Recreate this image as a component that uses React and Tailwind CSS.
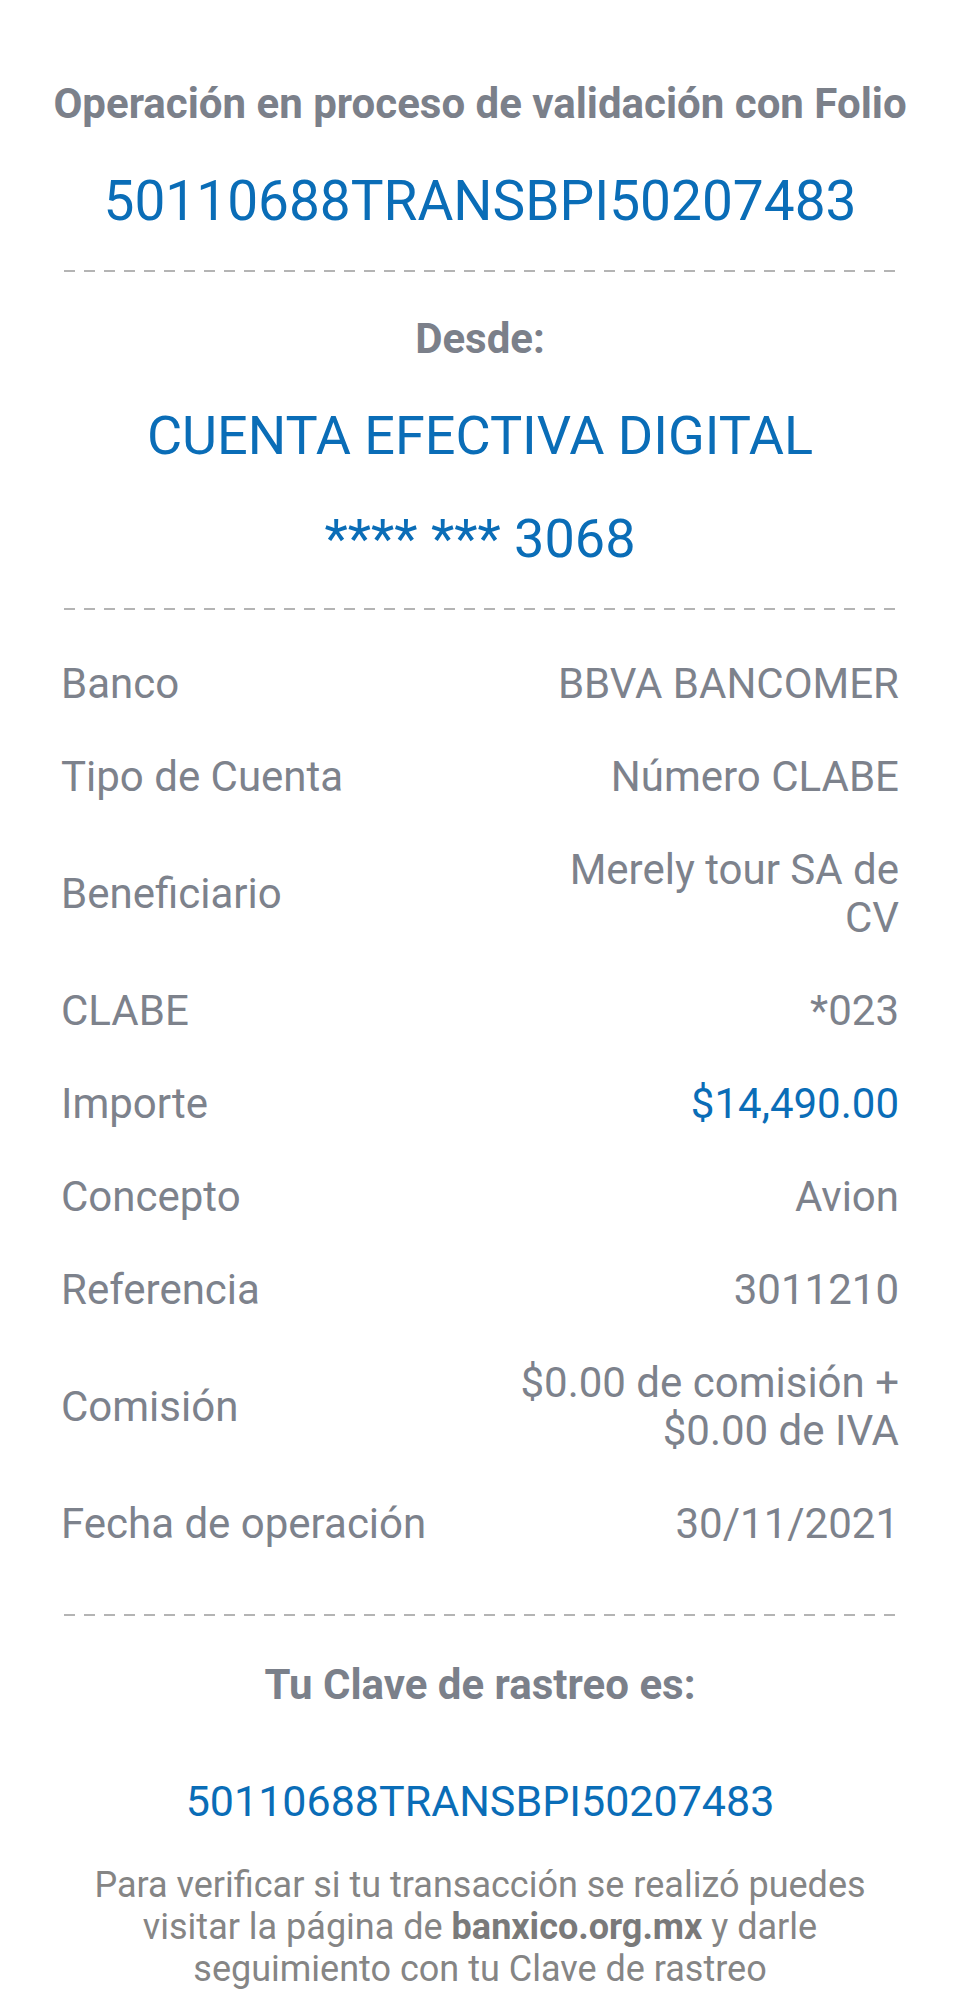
import React from 'react';

const rows = [
    { label: 'Banco', value: 'BBVA BANCOMER' },
    { label: 'Tipo de Cuenta', value: 'Número CLABE' },
    { label: 'Beneficiario', value: 'Merely tour SA de CV' },
    { label: 'CLABE', value: '*023' },
    { label: 'Importe', value: '$14,490.00', blue: true },
    { label: 'Concepto', value: 'Avion' },
    { label: 'Referencia', value: '3011210' },
    { label: 'Comisión', value: '$0.00 de comisión + $0.00 de IVA' },
    { label: 'Fecha de operación', value: '30/11/2021' }
];

// dashed separator line
const Divider = ({ className = '' }) => (
    <div className={`mx-[3px] h-[2px] bg-[repeating-linear-gradient(to_right,#b4b4b4_0px,#b4b4b4_11px,transparent_11px,transparent_20px)] ${className}`} />
);

const App = () => {
    return (
        <div className="min-h-[1995px] w-full bg-white px-[61px] pt-[79px] font-['Roboto',sans-serif] text-center">
            <h1 className="-mx-[20px] whitespace-nowrap text-[42px] leading-[50px] font-bold text-[#7b808a]">
                Operación en proceso de validación con Folio
            </h1>
            <div className="mt-[40px] text-[55px] leading-[64px] text-[#0a6db7]">
                50110688TRANSBPI50207483
            </div>

            <Divider className="mt-[37px]" />

            <div className="mt-[42px] text-[42px] leading-[50px] font-bold text-[#7b808a]">Desde:</div>
            <div className="mt-[40px] text-[54px] leading-[64px] text-[#0a6db7]">CUENTA EFECTIVA DIGITAL</div>
            <div className="mt-[39px] text-[54px] leading-[64px] text-[#0a6db7]">**** *** 3068</div>

            <Divider className="mt-[37px]" />

            {/* Detail rows */}
            <div className="mt-[27px] flex flex-col">
                {rows.map((row) => (
                    <div key={row.label} className="flex items-center justify-between py-[22.5px] text-[42px] leading-[48px]">
                        <span className="text-left text-[#7d828c]">{row.label}</span>
                        <span className={`max-w-[390px] text-right ${row.blue ? 'text-[#0a6db7]' : 'text-[#7d828c]'}`}>
                            {row.value}
                        </span>
                    </div>
                ))}
            </div>

            <Divider className="mt-[44px]" />

            <div className="mt-[44px] text-[42px] leading-[50px] font-bold text-[#7b808a]">Tu Clave de rastreo es:</div>
            <div className="mt-[66px] text-[43px] leading-[50px] text-[#0a6db7]">50110688TRANSBPI50207483</div>
            <p className="mt-[38px] text-[36px] leading-[42px] text-[#858585]">
                Para verificar si tu transacción se realizó puedes visitar la página de{' '}
                <span className="font-bold text-[#7a7a7a]">banxico.org.mx</span> y darle seguimiento con tu Clave de rastreo
            </p>
        </div>
    );
};

export default App;
